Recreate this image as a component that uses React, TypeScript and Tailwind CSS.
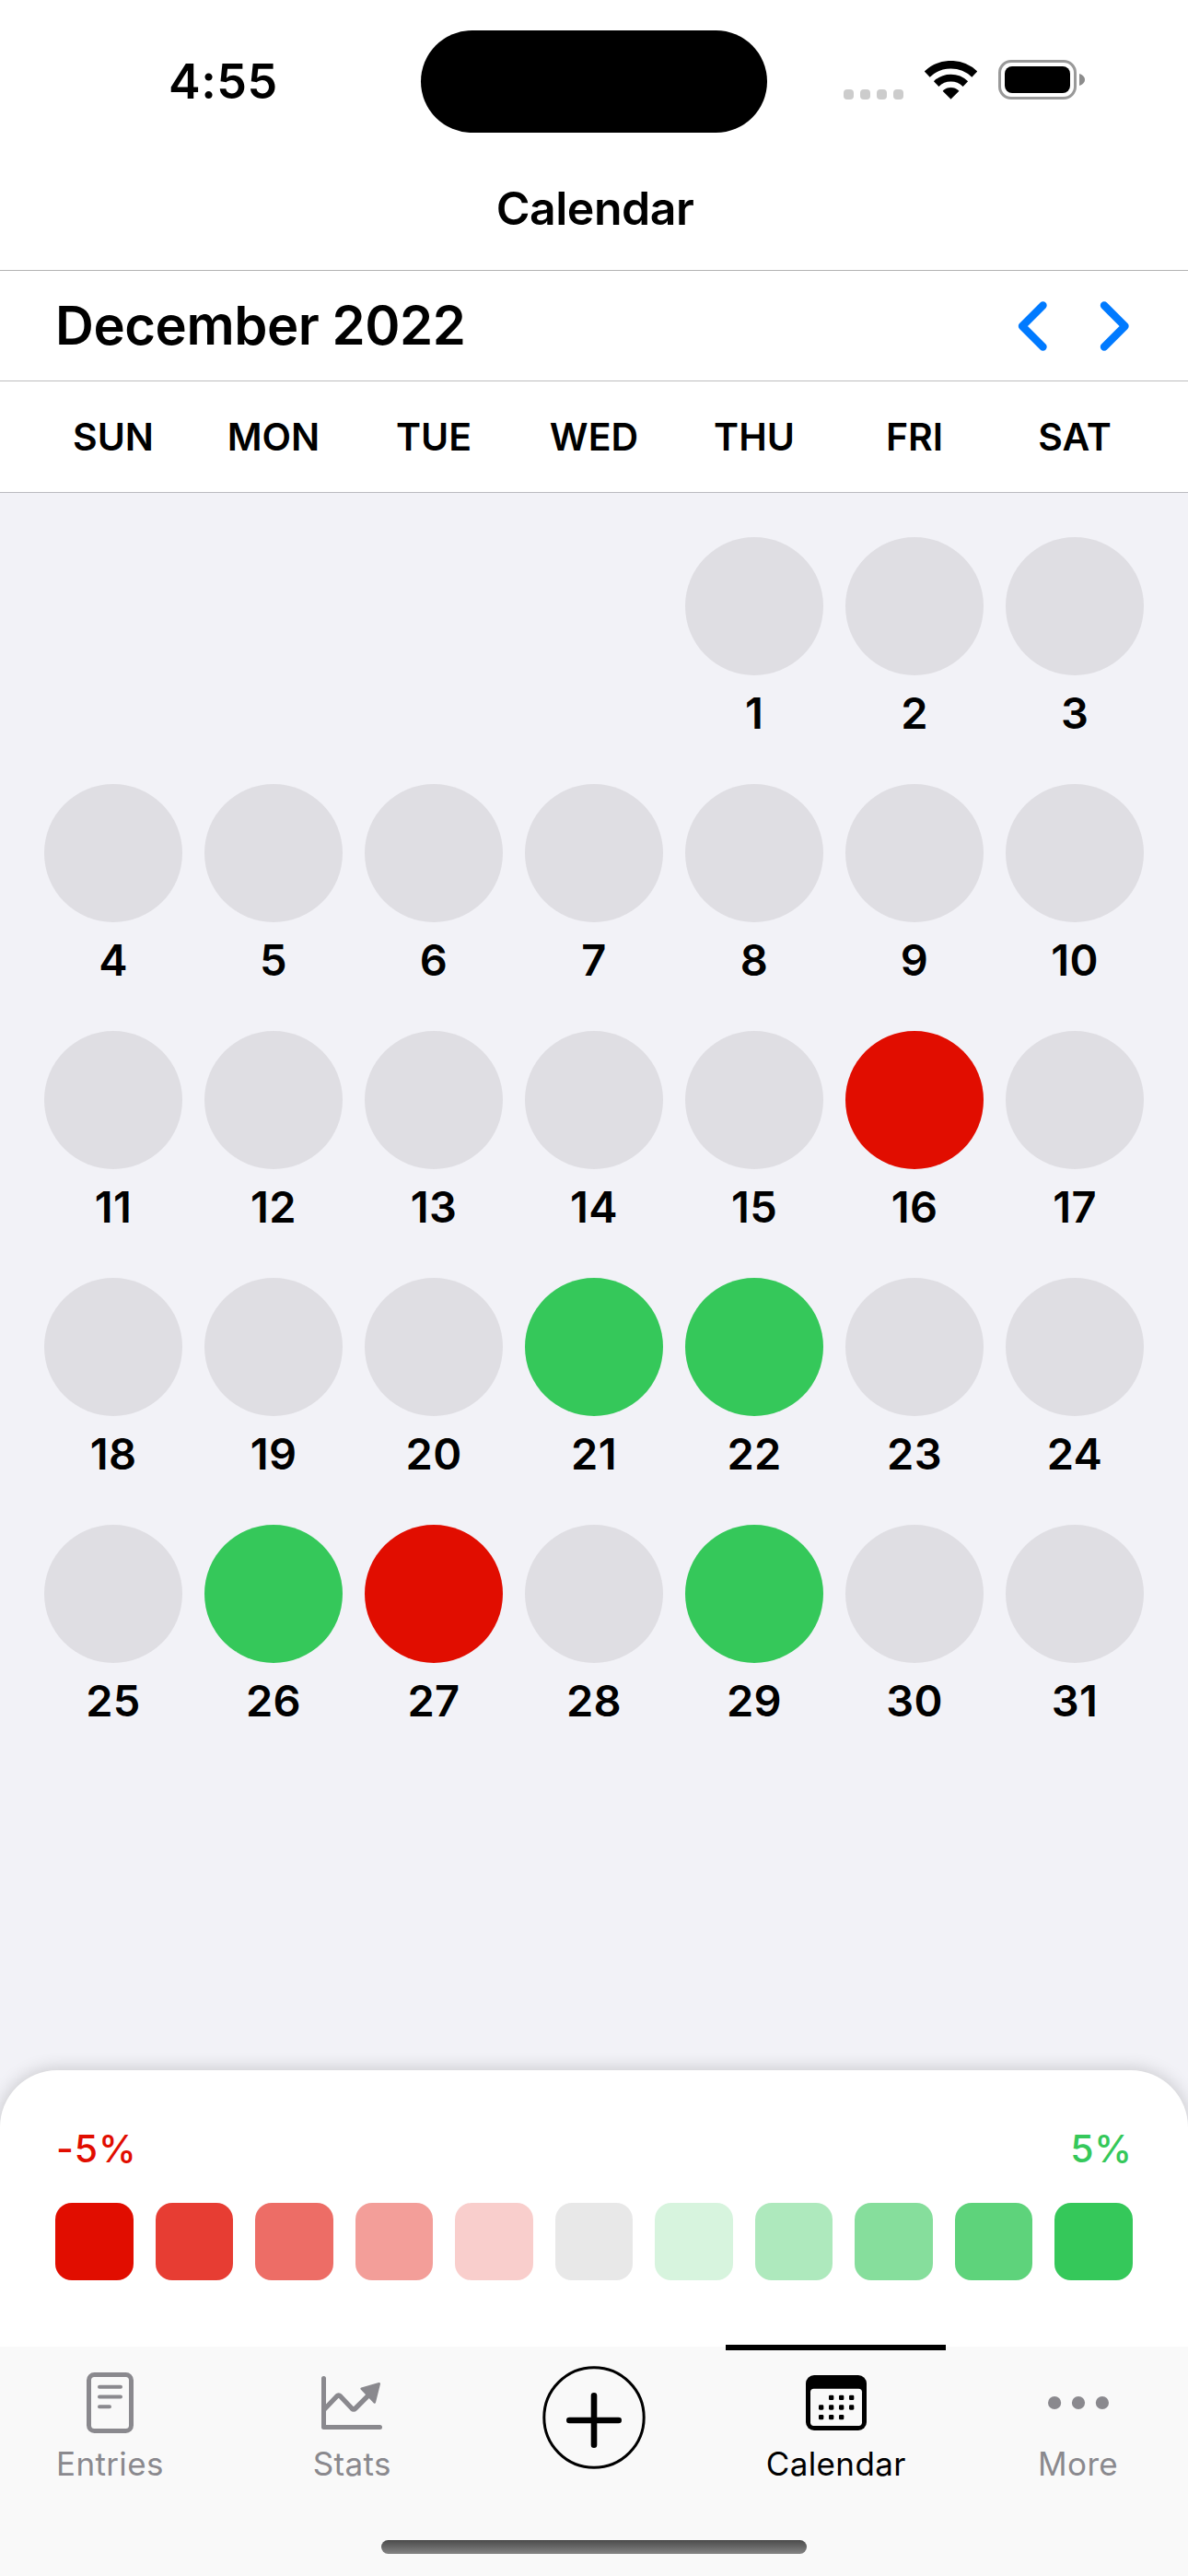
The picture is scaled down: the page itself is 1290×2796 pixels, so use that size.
type DayTone = "none" | "loss" | "gain";

const WEEKDAYS = ["SUN", "MON", "TUE", "WED", "THU", "FRI", "SAT"];
const LEADING_BLANKS = 4;
const DAYS = Array.from({ length: 31 }, (_, i) => i + 1);
const TONES: Record<number, DayTone> = { 16: "loss", 21: "gain", 22: "gain", 26: "gain", 27: "loss", 29: "gain" };

const TONE_CLASS: Record<DayTone, string> = {
  none: "bg-[#dfdee3]",
  loss: "bg-[#e10d00]",
  gain: "bg-[#35c85a]",
};

const SCALE = [
  "bg-[#e10d00]",
  "bg-[#e73d33]",
  "bg-[#ed6d66]",
  "bg-[#f39e99]",
  "bg-[#f9cecc]",
  "bg-[#e8e8e8]",
  "bg-[#d7f4de]",
  "bg-[#aee9bd]",
  "bg-[#86de9c]",
  "bg-[#5ed37b]",
  "bg-[#35c85a]",
];

function WifiIcon() {
  return (
    <svg className="ml-[23px] h-[42px] w-[57px]" viewBox="-86 -126 172 127" fill="none" stroke="black">
      <path d="M-78-82A113 113 0 0 1 78-82" strokeWidth="26" />
      <path d="M-48-50.4A69.6 69.6 0 0 1 48-50.4" strokeWidth="24" />
      <path d="M0-1L-26-27A38 38 0 0 1 26-27Z" fill="black" strokeWidth="2" strokeLinejoin="round" />
    </svg>
  );
}

function Battery() {
  return (
    <div className="ml-[23px] flex items-center">
      <div className="h-[43px] w-[85px] rounded-[14px] border-[3px] border-[#999999] p-[4px]">
        <div className="h-full w-full rounded-[8px] bg-black" />
      </div>
      <svg className="ml-[3px] h-[13px] w-[6px]" viewBox="0 0 6 13">
        <path d="M0 0C3.400 1 6 3.500 6 6.500S3.400 12 0 13Z" fill="#8c8c8c" />
      </svg>
    </div>
  );
}

function StatusBar() {
  return (
    <div className="grid h-[177px] grid-cols-[457px_376px_1fr] items-center">
      <div className="pl-[183px] text-[52px] leading-[60px] font-semibold tracking-[0.5px]">4:55</div>
      <div className="h-[111px] rounded-full bg-black" />
      <div className="flex items-center pb-[4px] pl-[83px]">
        <div className="flex gap-[7px] pt-[31px]">
          {[0, 1, 2, 3].map((i) => (
            <div key={i} className="h-[11px] w-[11px] rounded-[4px] bg-[#cccccc]" />
          ))}
        </div>
        <WifiIcon />
        <Battery />
      </div>
    </div>
  );
}

function Chevron({ d }: { d: string }) {
  return (
    <svg className="h-[54px] w-[32px]" viewBox="0 0 32 54" fill="none" stroke="#007aff" strokeWidth="8.400" strokeLinecap="round" strokeLinejoin="round">
      <path d={d} />
    </svg>
  );
}

function Day({ day }: { day: number }) {
  return (
    <div className="flex h-[268px] flex-col items-center">
      <div className={`h-[150px] w-[150px] rounded-full ${TONE_CLASS[TONES[day] ?? "none"]}`} />
      <div className="mt-[11px] text-[47px] leading-[60px] font-semibold tracking-[0.3px]">{day}</div>
    </div>
  );
}

function EntriesIcon() {
  return (
    <svg className="h-[66px] w-[51px]" viewBox="0 0 153 198" fill="none" stroke="#8a898e" strokeLinecap="round">
      <rect x="7.500" y="7.500" width="138" height="183" rx="18" strokeWidth="15" />
      <path d="M42 47.500H111M42 79.500H111M42 112H75" strokeWidth="12" />
    </svg>
  );
}

function StatsIcon() {
  return (
    <svg className="h-[66px] w-[66px]" viewBox="0 -12 198 198" fill="none" stroke="#8a898e" strokeLinecap="round" strokeLinejoin="round">
      <path d="M7.500 7.500V166.500H190.500" strokeWidth="15" />
      <path d="M10 108L50 66Q56 60 62 66L99 105Q105 111 111 105L158 58" strokeWidth="16" />
      <path d="M131 41L188 25L173 85Z" fill="#8a898e" strokeWidth="8" />
    </svg>
  );
}

function CalendarIcon() {
  const dots = [
    [83, 73], [116, 73], [149, 73],
    [50, 105], [83, 105], [116, 105], [149, 105],
    [50, 137], [83, 137], [116, 137],
  ];
  return (
    <svg className="h-[66px] w-[66px]" viewBox="0 -9 198 198">
      <rect width="198" height="180" rx="27" fill="black" />
      <rect x="15" y="44" width="168" height="121" rx="11" fill="#f9f9f9" />
      {dots.map(([x, y]) => (
        <rect key={`${x}-${y}`} x={x - 8} y={y - 8} width="16" height="16" rx="4" fill="black" />
      ))}
    </svg>
  );
}

function MoreIcon() {
  return (
    <svg className="h-[66px] w-[66px]" viewBox="0 0 66 66" fill="#8a898e">
      <circle cx="7.100" cy="33" r="7.100" />
      <circle cx="33" cy="33" r="7.100" />
      <circle cx="58.900" cy="33" r="7.100" />
    </svg>
  );
}

function Tab({ label, icon, active = false }: { label: string; icon: React.ReactNode; active?: boolean }) {
  return (
    <div className={`relative flex flex-1 flex-col items-center pt-[28px] ${active ? "text-black" : "text-[#8a898e]"}`}>
      {active && <div className="absolute -top-[2px] left-0 h-[6px] w-full bg-black" />}
      {icon}
      <div className="mt-[13px] text-[35px] leading-[41px] tracking-[0.35px]">{label}</div>
    </div>
  );
}

export default function App() {
  return (
    <div className="flex h-[2796px] w-[1290px] flex-col overflow-hidden bg-[#f2f2f7] font-[Inter,sans-serif] text-black">
      <header className="h-[294px] border-b border-[#b3b3b3] bg-white">
        <StatusBar />
        <h1 className="pt-[19px] pl-[2px] text-center text-[50px] leading-[60px] font-semibold tracking-[-0.5px]">Calendar</h1>
      </header>

      <div className="flex h-[120px] items-center justify-between border-b border-[#bdbdbf] bg-white pr-[64px] pl-[60px]">
        <h2 className="pb-[2px] text-[58px] leading-[70px] font-semibold tracking-[-0.45px]">December 2022</h2>
        <div className="flex gap-[57px]">
          <Chevron d="M27.500 4.500L5 27L27.500 49.500" />
          <Chevron d="M5 4.500L27.500 27L5 49.500" />
        </div>
      </div>

      <div className="grid h-[121px] grid-cols-7 items-center gap-[24px] border-b border-[#bbbbc0] bg-white px-[48px]">
        {WEEKDAYS.map((name) => (
          <div key={name} className="text-center text-[41px] leading-[50px] font-semibold">{name}</div>
        ))}
      </div>

      <main className="grid flex-1 grid-cols-7 content-start gap-x-[24px] px-[48px] pt-[48px]">
        {Array.from({ length: LEADING_BLANKS }, (_, i) => (
          <div key={`blank-${i}`} />
        ))}
        {DAYS.map((day) => (
          <Day key={day} day={day} />
        ))}
      </main>

      <section className="h-[300px] rounded-t-[62px] bg-white px-[60px] pt-[60px] shadow-[0_0_20px_rgba(0,0,0,0.2)]">
        <div className="flex justify-between pl-px text-[41px] leading-[50px] font-medium tracking-[0.9px]">
          <span className="text-[#e10d00]">-5%</span>
          <span className="text-[#35c85a]">5%</span>
        </div>
        <div className="mt-[34px] flex gap-[24px]">
          {SCALE.map((color) => (
            <div key={color} className={`h-[84px] flex-1 rounded-[18px] ${color}`} />
          ))}
        </div>
      </section>

      <nav className="relative flex h-[249px] gap-[24px] bg-[#f9f9f9]">
        <Tab label="Entries" icon={<EntriesIcon />} />
        <Tab label="Stats" icon={<StatsIcon />} />
        <div className="flex flex-1 flex-col items-center pt-[21px]">
          <svg className="h-[112px] w-[112px]" viewBox="0 0 112 112" fill="none" stroke="black" strokeLinecap="round">
            <circle cx="56" cy="56" r="54.200" strokeWidth="3" />
            <path d="M56 32.300V85.700M29.300 59H82.700" strokeWidth="6.600" />
          </svg>
        </div>
        <Tab label="Calendar" icon={<CalendarIcon />} active />
        <Tab label="More" icon={<MoreIcon />} />
        <div className="absolute bottom-[24px] left-[414px] h-[15px] w-[462px] rounded-full bg-linear-to-b from-[#4b4b4b] to-[#858585]" />
      </nav>
    </div>
  );
}
